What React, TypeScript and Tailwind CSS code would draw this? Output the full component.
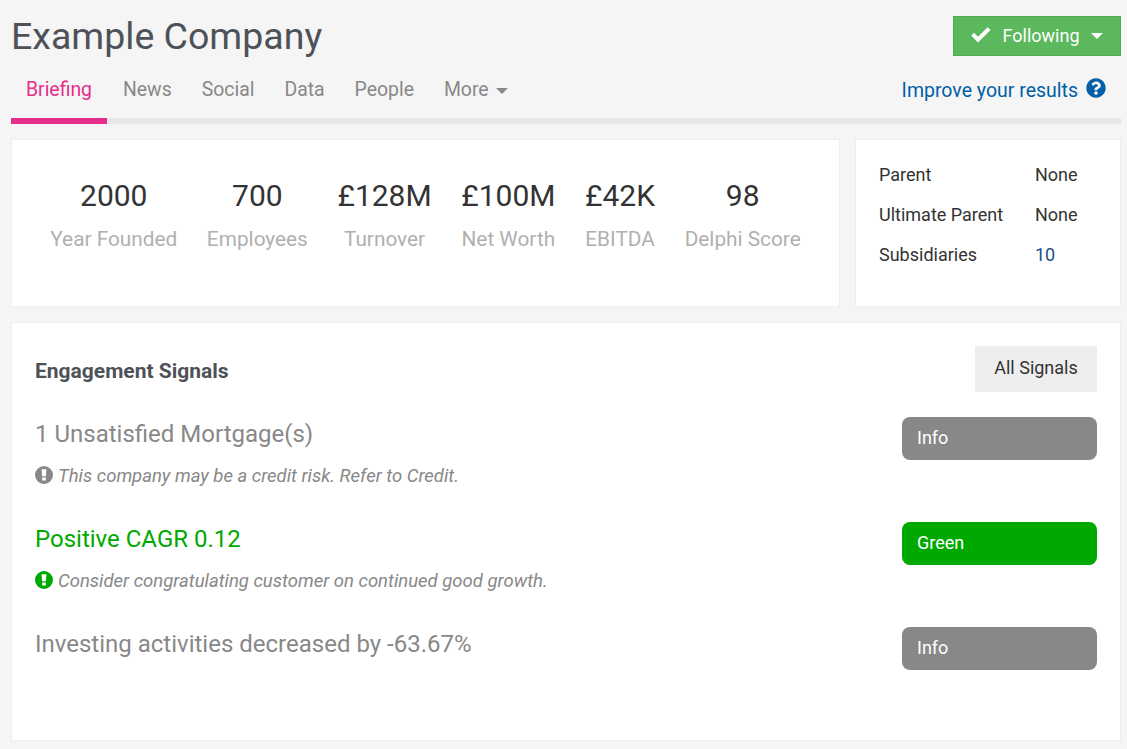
import React from 'react';
import { FaQuestionCircle } from 'react-icons/fa';

const stats = [
  { value: '2000', label: 'Year Founded' },
  { value: '700', label: 'Employees' },
  { value: '£128M', label: 'Turnover' },
  { value: '£100M', label: 'Net Worth' },
  { value: '£42K', label: 'EBITDA' },
  { value: '98', label: 'Delphi Score' },
];

const relations = [
  { label: 'Parent', value: 'None' },
  { label: 'Ultimate Parent', value: 'None' },
  { label: 'Subsidiaries', value: '10' },
];

const tabs = ['News', 'Social', 'Data', 'People'];

const Caret: React.FC<{ className: string }> = ({ className }) => (
  <span className={`inline-block h-0 w-0 border-x-[6px] border-t-[6px] border-x-transparent ${className}`} />
);

// heavier than the react-icons one, thick bar and square dot
const AlertIcon: React.FC<{ className: string }> = ({ className }) => (
  <svg viewBox="0 0 18 18" className={`-mt-[2px] h-[18px] w-[18px] shrink-0 ${className}`}>
    <circle cx="9" cy="9" r="9" fill="currentColor" />
    <path d="M6.6 3.2h4.8l-.5 7h-3.8zM7.2 11.4h3.6v3.2H7.2z" fill="#ffffff" />
  </svg>
);

const CheckIcon: React.FC = () => (
  <svg viewBox="0 0 20 16" className="mr-[11px] h-4 w-5 shrink-0">
    <path d="M0.2 8.6 3 5.8l4 4L16.6 0.2l2.9 2.9L7 15.6z" fill="#ffffff" />
  </svg>
);

const App: React.FC = () => {
  return (
    <div className="h-[749px] w-[1127px] overflow-hidden bg-[#f5f5f5] pl-[11px] pr-[6px] font-['Roboto',sans-serif]">
      {/* Header */}
      <div className="flex h-[72px] items-start justify-between">
        <h1 className="pt-[13px] text-[37.5px] leading-[46px] text-[#4d5258]">Example Company</h1>
        <button className="mt-4 flex h-10 w-[168px] items-center justify-center border border-[#4cae4c] bg-[#5cb85c] pb-[2px] text-[18px] text-white">
          <CheckIcon />
          <span>Following</span>
          <Caret className="ml-[11px] mt-[2px] border-t-white" />
        </button>
      </div>

      {/* Tabs */}
      <div className="flex h-[52px] border-b-[6px] border-[#e7e7e7]">
        <a className="-mb-[6px] h-[52px] w-[96px] border-b-[6px] border-[#e52d8c] pt-[3px] text-center text-[19.4px] leading-[30px] text-[#e52d8c]">Briefing</a>
        <div className="ml-4 flex gap-[30px] pt-[3px] text-[19.4px] leading-[30px] text-[#888888]">
          {tabs.map((tab) => (
            <a key={tab}>{tab}</a>
          ))}
          <a className="flex h-[30px] items-center">
            More
            <Caret className="ml-[7px] mt-[2px] border-t-[#888888]" />
          </a>
        </div>
        <a className="ml-auto flex gap-2 pt-[3px] text-[19.5px] leading-[32px] text-[#005fa8]">
          Improve your results
          <FaQuestionCircle className="mr-[15px] mt-[3px] h-5 w-5" />
        </a>
      </div>

      {/* Summary cards */}
      <div className="mt-[15px] flex gap-[15px]">
        <div className="flex h-[168px] w-[829px] justify-center gap-[29.6px] border border-[#eeeeee] bg-white pt-9">
          {stats.map((stat) => (
            <div key={stat.label} className="text-center">
              <div className="text-[30px] leading-[40px] text-[#333333]">{stat.value}</div>
              <div className="mt-[9px] text-[20.8px] leading-[28px] text-[#b0b0b0]">{stat.label}</div>
            </div>
          ))}
        </div>
        <div className="flex h-[168px] w-[266px] flex-col gap-[14px] border border-[#eeeeee] bg-white pl-[23px] pt-[22px] text-[18px] leading-[26px] text-[#333333]">
          {relations.map((row) => (
            <div key={row.label} className="flex">
              <span className="w-[156px]">{row.label}</span>
              <span className={row.label === 'Subsidiaries' ? 'text-[#1b4f86]' : ''}>{row.value}</span>
            </div>
          ))}
        </div>
      </div>

      {/* Engagement signals */}
      <div className="mt-[15px] h-[419px] w-[1110px] border border-[#eeeeee] bg-white px-[23px] pt-[23px]">
        <div className="flex h-[46px] items-center justify-between">
          <h2 className="pt-[6px] text-[21px] font-bold text-[#4d5258]">Engagement Signals</h2>
          <button className="h-[46px] w-[122px] bg-[#eeeeee] pb-[3px] text-[18px] text-[#333333]">All Signals</button>
        </div>

        <div className="mt-[25px] flex h-[105px] items-start justify-between">
          <div>
            <div className="text-[24px] leading-[34px] text-[#888888]">1 Unsatisfied Mortgage(s)</div>
            <div className="mt-3 flex items-center gap-[5px] text-[18.5px] italic leading-[26px] text-[#888888]">
              <AlertIcon className="text-[#888888]" />
              This company may be a credit risk. Refer to Credit.
            </div>
          </div>
          <div className="h-[43px] w-[195px] rounded-lg bg-[#888888] pl-[15px] text-[18px] leading-[41px] text-white">Info</div>
        </div>

        <div className="flex h-[105px] items-start justify-between">
          <div>
            <div className="text-[24px] leading-[34px] text-[#00a900]">Positive CAGR 0.12</div>
            <div className="mt-3 flex items-center gap-[5px] text-[18.5px] italic leading-[26px] text-[#888888]">
              <AlertIcon className="text-[#00a900]" />
              Consider congratulating customer on continued good growth.
            </div>
          </div>
          <div className="h-[43px] w-[195px] rounded-lg bg-[#00a900] pl-[15px] text-[18px] leading-[41px] text-white">Green</div>
        </div>

        <div className="flex items-start justify-between">
          <div className="text-[24px] leading-[34px] text-[#888888]">Investing activities decreased by -63.67%</div>
          <div className="h-[43px] w-[195px] rounded-lg bg-[#888888] pl-[15px] text-[18px] leading-[41px] text-white">Info</div>
        </div>
      </div>
    </div>
  );
};

export default App;
